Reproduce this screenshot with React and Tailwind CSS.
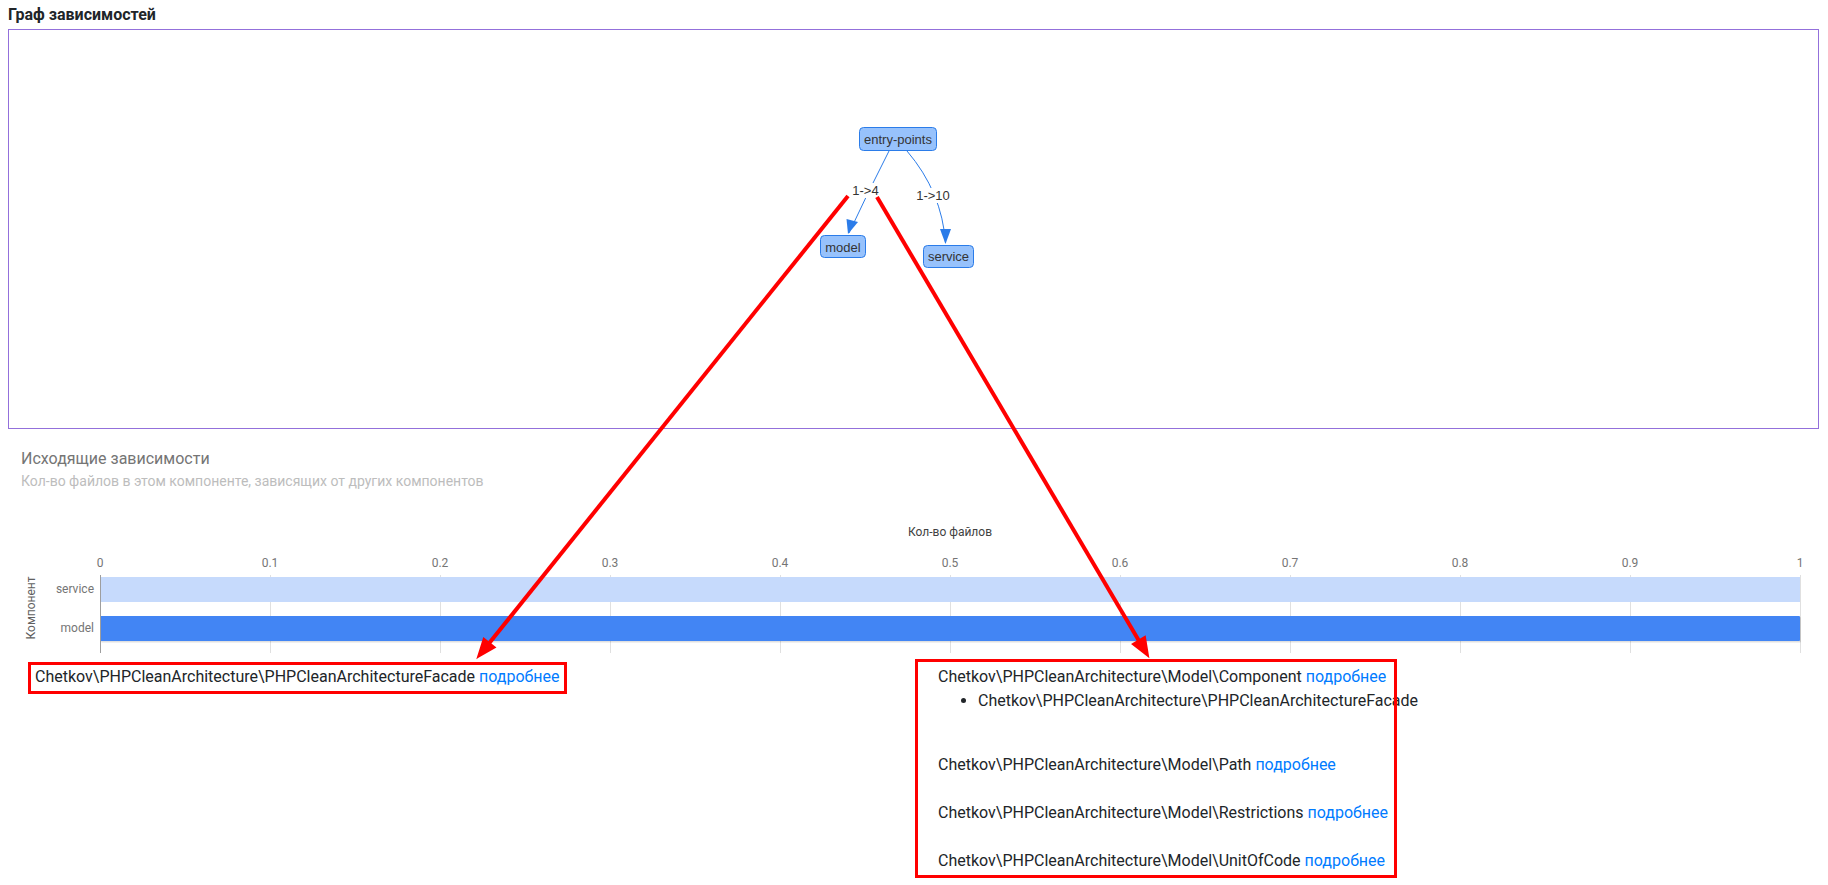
import React from "react";

const ticks = [0, 0.1, 0.2, 0.3, 0.4, 0.5, 0.6, 0.7, 0.8, 0.9, 1];

function Graph() {
  return (
    <svg width="1809" height="398" viewBox="9 30 1809 398" className="block">
      <g className="font-['Liberation_Sans',Arial,sans-serif]">
        {/* edges */}
        <path d="M889 151 Q 868 192 849 233" fill="none" stroke="#2b7ce9" strokeWidth="1" />
        <polygon points="848,234 846.5,219 858,222" fill="#2b7ce9" />
        <path d="M907 151 Q 942 192 945.5 243" fill="none" stroke="#2b7ce9" strokeWidth="1" />
        <polygon points="945.5,244 940,229 951,229" fill="#2b7ce9" />
        {/* labels */}
        <rect x="852" y="183" width="27" height="15" fill="#fff" />
        <text x="865.5" y="195" textAnchor="middle" fontSize="13" fill="#343434">1-&gt;4</text>
        <rect x="916" y="188" width="34" height="15" fill="#fff" />
        <text x="933" y="200" textAnchor="middle" fontSize="13" fill="#343434">1-&gt;10</text>
        {/* nodes */}
        <rect x="859.5" y="127.5" width="77" height="23" rx="4" fill="#97c2fc" stroke="#2b7ce9" strokeWidth="1" />
        <text x="898" y="143.5" textAnchor="middle" fontSize="13" fill="#343434">entry-points</text>
        <rect x="820.5" y="235.5" width="45" height="22" rx="4" fill="#97c2fc" stroke="#2b7ce9" strokeWidth="1" />
        <text x="843" y="251.5" textAnchor="middle" fontSize="13" fill="#343434">model</text>
        <rect x="923.5" y="245.5" width="50" height="22" rx="4" fill="#97c2fc" stroke="#2b7ce9" strokeWidth="1" />
        <text x="948.5" y="261" textAnchor="middle" fontSize="13" fill="#343434">service</text>
      </g>
    </svg>
  );
}

function Chart() {
  return (
    <svg width="1828" height="164" viewBox="0 491 1828 164" className="block">
      <text x="950" y="536" textAnchor="middle" fontSize="12" fill="#424242">Кол-во файлов</text>
      {ticks.map((t, i) => (
        <text key={i} x={100 + 170 * i} y="567" textAnchor="middle" fontSize="12" fill="#757575">{String(t)}</text>
      ))}
      {ticks.map((t, i) => (
        <line key={"g" + i} x1={100.5 + 170 * i} x2={100.5 + 170 * i} y1="575" y2="653" stroke="#e0e0e0" strokeWidth="1" />
      ))}
      <rect x="100" y="577" width="1700" height="25" fill="#c6dafc" />
      <rect x="101" y="617" width="1700" height="25.5" rx="1" fill="#000" opacity="0.12" />
      <rect x="100" y="616" width="1700" height="25" rx="1" fill="#4285f4" />
      <line x1="100.5" x2="100.5" y1="575" y2="653" stroke="#9e9e9e" strokeWidth="1" />
      <text x="94" y="593" textAnchor="end" fontSize="12" fill="#757575">service</text>
      <text x="94" y="632" textAnchor="end" fontSize="12" fill="#757575">model</text>
      <text x="0" y="0" transform="translate(35 608) rotate(-90)" textAnchor="middle" fontSize="12" fill="#616161">Компонент</text>
    </svg>
  );
}

function Entry({ name, children }) {
  return (
    <div className="block">
      <p className="leading-6 whitespace-nowrap">
        {name} <a className="text-[#007bff]" href="#">подробнее</a>
      </p>
      {children}
    </div>
  );
}

export default function App() {
  return (
    <div className="relative w-[1828px] h-[885px] bg-white text-[#212529] overflow-hidden font-['Roboto','Liberation_Sans',sans-serif]">
      <div className="h-[29px] pt-[3px] pl-2 text-[16px] font-bold leading-6 text-[#212529]">Граф зависимостей</div>
      <div className="ml-2 w-[1811px] h-[400px] border border-[#9370db]">
        <Graph />
      </div>
      <div className="mt-[18px] pl-[21px]">
        <div className="text-[16px] leading-6 text-[#757575]">Исходящие зависимости</div>
        <div className="text-[14px] leading-5 text-[#bdbdbd]">Кол-во файлов в этом компоненте, зависящих от других компонентов</div>
      </div>
      <Chart />
      <div className="grid grid-cols-[938px_1fr] pt-[10px] text-[16px]">
        <div className="pl-[35px]">
          <Entry name="Chetkov\PHPCleanArchitecture\PHPCleanArchitectureFacade" />
        </div>
        <div className="grid gap-6 justify-items-start">
          <Entry name="Chetkov\PHPCleanArchitecture\Model\Component">
            <ul className="list-disc pl-10 mb-4">
              <li className="leading-6 whitespace-nowrap">Chetkov\PHPCleanArchitecture\PHPCleanArchitectureFacade</li>
            </ul>
          </Entry>
          <Entry name="Chetkov\PHPCleanArchitecture\Model\Path" />
          <Entry name="Chetkov\PHPCleanArchitecture\Model\Restrictions" />
          <Entry name="Chetkov\PHPCleanArchitecture\Model\UnitOfCode" />
        </div>
      </div>

      {/* annotations */}
      <div className="absolute left-[28px] top-[662px] w-[539px] h-[32px] border-[3px] border-[#ff0000] pointer-events-none" />
      <div className="absolute left-[915px] top-[659px] w-[482px] h-[219px] border-[3px] border-[#ff0000] pointer-events-none" />
      <svg className="absolute left-0 top-0 pointer-events-none" width="1828" height="885">
        <line x1="848" y1="196" x2="489.3" y2="643" stroke="#ff0000" strokeWidth="4" />
        <polygon points="478,657 494.7,647.4 483.8,638.6" fill="#ff0000" stroke="#ff0000" strokeWidth="2" />
        <line x1="877" y1="197" x2="1138.8" y2="640.5" stroke="#ff0000" strokeWidth="4" />
        <polygon points="1148,656 1144.9,636.9 1132.8,644.1" fill="#ff0000" stroke="#ff0000" strokeWidth="2" />
      </svg>
    </div>
  );
}
